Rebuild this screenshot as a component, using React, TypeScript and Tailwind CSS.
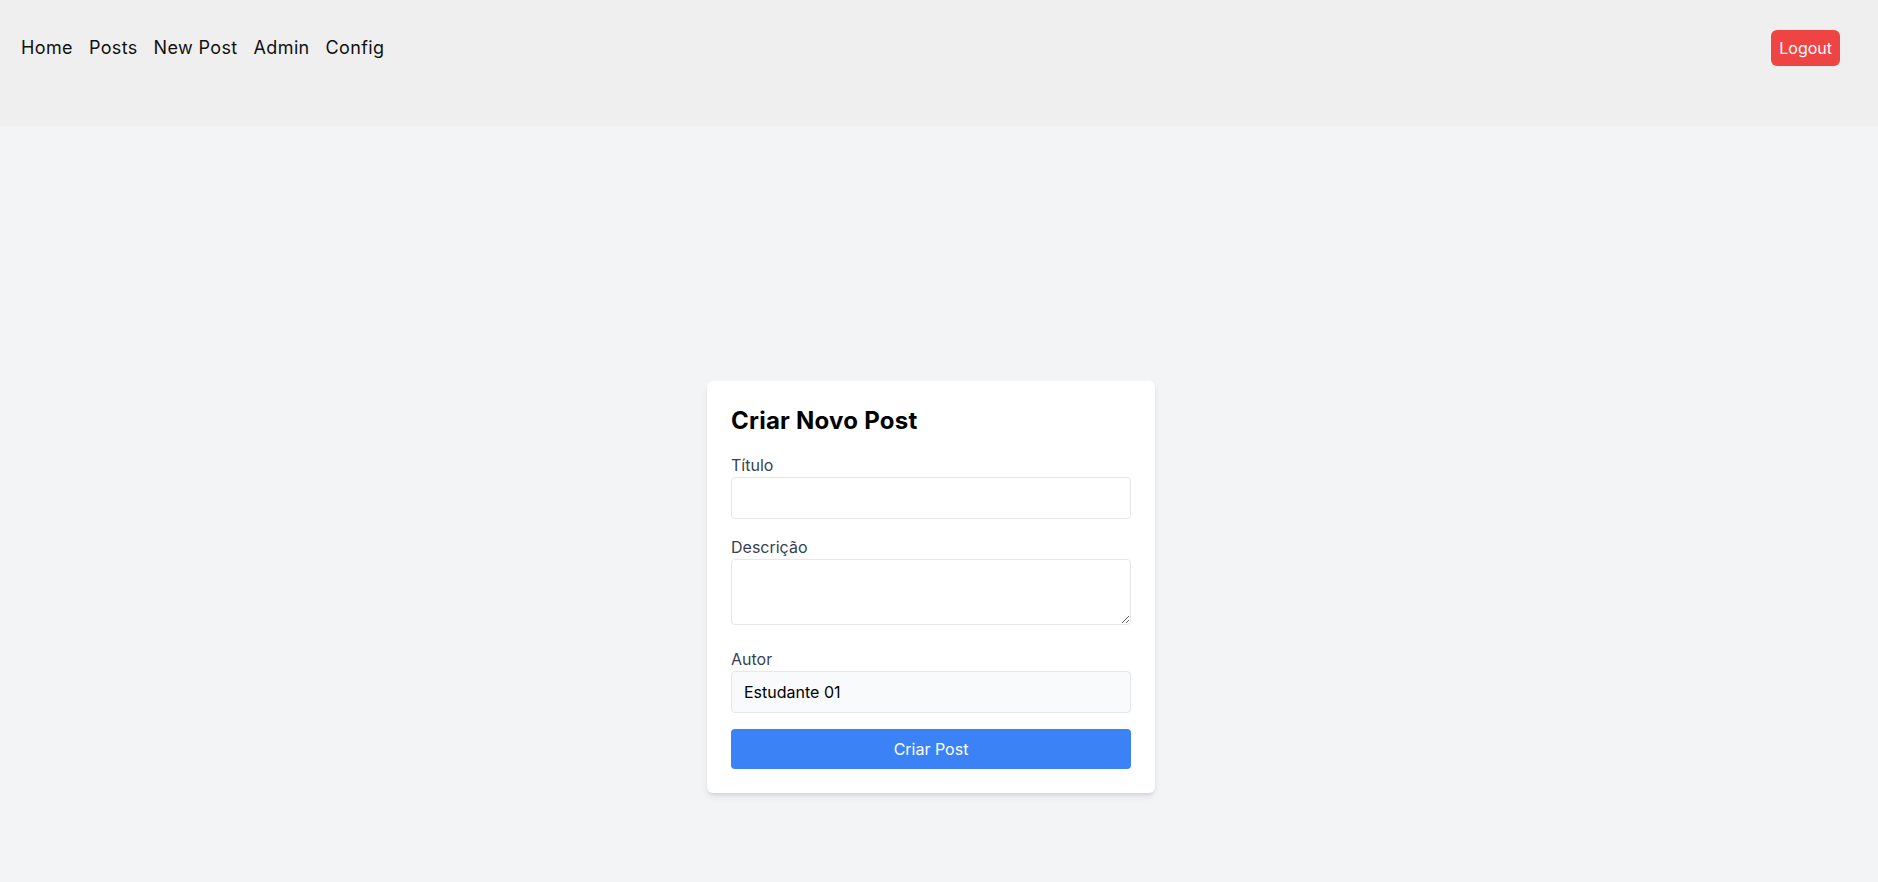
export default function App() {
  const links = ['Home', 'Posts', 'New Post', 'Admin', 'Config']

  return (
    <div className="min-h-screen bg-[#f3f4f6] font-['Inter','Noto_Sans',sans-serif]">
      <header className="h-[126px] bg-[#efefef] pl-[21px] pr-[38px] pt-[30px]">
        <div className="flex items-center justify-between">
          <nav className="flex items-center gap-4 text-lg tracking-[0.02em] text-[#111111]">
            {links.map((l) => (
              <a key={l} href="#" className="hover:underline">
                {l}
              </a>
            ))}
          </nav>
          <button className="rounded-md bg-[#ef4444] px-2 py-1.5 text-base text-white">
            Logout
          </button>
        </div>
      </header>

      <main className="flex justify-center pr-4 pt-[255px] pb-20">
        <div className="w-[448px] rounded-md bg-white p-6 shadow-md">
          <h1 className="mb-4 text-2xl font-bold tracking-[0.01em] text-black">Criar Novo Post</h1>

          <div className="mb-4">
            <label className="block text-[#374151]">Título</label>
            <input
              type="text"
              className="block w-full rounded border border-[#e5e7eb] px-3 py-2 outline-none"
            />
          </div>

          <div className="mb-4">
            <label className="block text-[#374151]">Descrição</label>
            <textarea
              rows={2}
              className="w-full rounded border border-[#e5e7eb] px-3 py-2 outline-none"
            />
          </div>

          <div className="mb-4">
            <label className="block text-[#374151]">Autor</label>
            <input
              type="text"
              readOnly
              value="Estudante 01"
              className="block w-full rounded border border-[#e5e7eb] bg-[#f9fafb] px-3 py-2 text-black outline-none"
            />
          </div>

          <button className="w-full rounded bg-[#3b82f6] py-2 text-white">Criar Post</button>
        </div>
      </main>
    </div>
  )
}
